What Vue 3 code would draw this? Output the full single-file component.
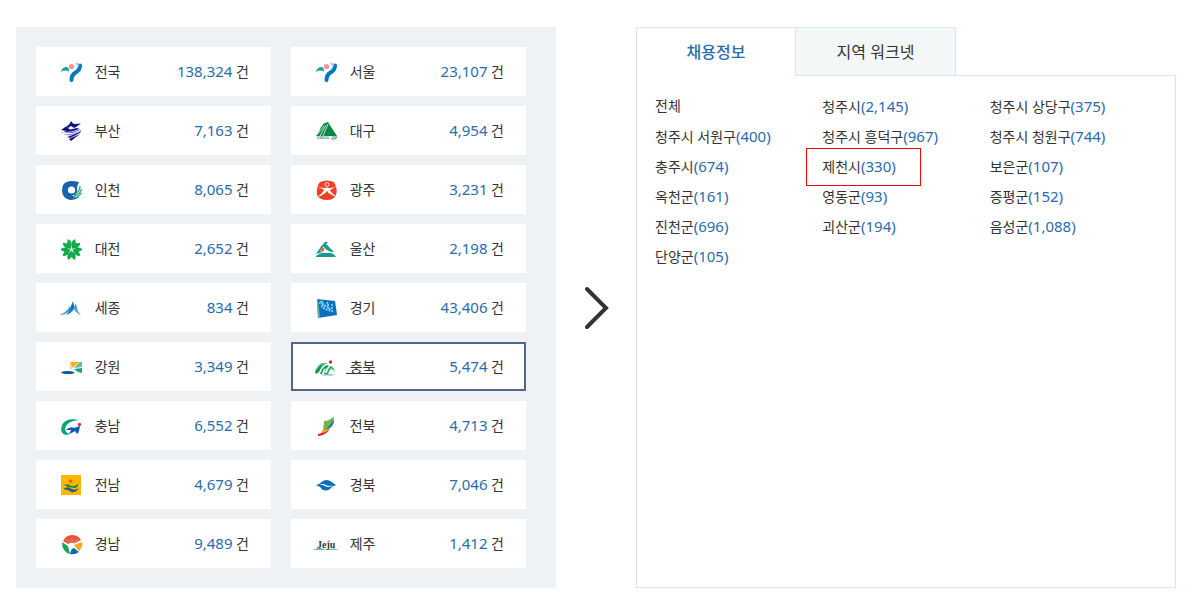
<template>
  <div class="page">
    <ul class="region_list">
      <li v-for="region in regions" :key="region.name">
        <button
          class="region"
          :class="{ active: region.name === selected }"
          @click="selected = region.name"
        >
          <svg class="region_icon" viewBox="0 0 28 24" aria-hidden="true" v-html="icons[region.icon]"></svg>
          <span class="region_name">&nbsp;{{ region.name }}</span>
          <span class="region_count"
            ><span class="number">{{ region.count.toLocaleString('en-US') }}</span> 건</span
          >
        </button>
      </li>
    </ul>

    <div class="arrow">
      <svg viewBox="0 0 28 44" aria-hidden="true">
        <path d="M5 3L24 22L5 41" />
      </svg>
    </div>

    <div class="detail">
      <div class="tabs" role="tablist">
        <button
          v-for="tab in tabs"
          :key="tab"
          class="tab"
          :class="{ active: tab === activeTab }"
          role="tab"
          :aria-selected="tab === activeTab"
          @click="activeTab = tab"
        >
          {{ tab }}
        </button>
      </div>
      <ul class="city_list">
        <li v-for="city in cities" :key="city.name" :class="{ marked: city.name === '제천시' }">
          <a href="#" @click.prevent
            >{{ city.name
            }}<span v-if="city.count" class="number">({{ city.count.toLocaleString('en-US') }})</span></a
          >
        </li>
      </ul>
    </div>
  </div>
</template>

<script setup>
import { ref } from 'vue'

const selected = ref('충북')
const tabs = ['채용정보', '지역 워크넷']
const activeTab = ref('채용정보')

const regions = [
  { name: '전국', count: 138324, icon: 'seoul' },
  { name: '서울', count: 23107, icon: 'seoul' },
  { name: '부산', count: 7163, icon: 'busan' },
  { name: '대구', count: 4954, icon: 'daegu' },
  { name: '인천', count: 8065, icon: 'incheon' },
  { name: '광주', count: 3231, icon: 'gwangju' },
  { name: '대전', count: 2652, icon: 'daejeon' },
  { name: '울산', count: 2198, icon: 'ulsan' },
  { name: '세종', count: 834, icon: 'sejong' },
  { name: '경기', count: 43406, icon: 'gyeonggi' },
  { name: '강원', count: 3349, icon: 'gangwon' },
  { name: '충북', count: 5474, icon: 'chungbuk' },
  { name: '충남', count: 6552, icon: 'chungnam' },
  { name: '전북', count: 4713, icon: 'jeonbuk' },
  { name: '전남', count: 4679, icon: 'jeonnam' },
  { name: '경북', count: 7046, icon: 'gyeongbuk' },
  { name: '경남', count: 9489, icon: 'gyeongnam' },
  { name: '제주', count: 1412, icon: 'jeju' },
]

const cities = [
  { name: '전체' },
  { name: '청주시', count: 2145 },
  { name: '청주시 상당구', count: 375 },
  { name: '청주시 서원구', count: 400 },
  { name: '청주시 흥덕구', count: 967 },
  { name: '청주시 청원구', count: 744 },
  { name: '충주시', count: 674 },
  { name: '제천시', count: 330 },
  { name: '보은군', count: 107 },
  { name: '옥천군', count: 161 },
  { name: '영동군', count: 93 },
  { name: '증평군', count: 152 },
  { name: '진천군', count: 696 },
  { name: '괴산군', count: 194 },
  { name: '음성군', count: 1088 },
  { name: '단양군', count: 105 },
]

const petal = 'M13.5 11.500L10 8Q8.500 4 10.500 2L13.500 5L16.500 2Q18.500 4 17 8Z'

const icons = {
  seoul: `
    <path d="M3 12Q4 7 9 7Q11 7.500 11 11.500Q7 9.500 3 12Z" fill="#00a79d"/>
    <circle cx="13.500" cy="6.500" r="2.600" fill="#f4919f"/>
    <path d="M22 5.500Q22 10 17.500 12.500Q13.500 15 13.500 20" fill="none" stroke="#0078c4" stroke-width="4" stroke-linecap="round"/>
    <path d="M17 3L20 2.500L21 6L19 8Q19.500 5.500 17 3Z" fill="#a8cde9"/>`,
  busan: `
    <g fill="#10128a"><path d="M13 2L15 4.500L17 5L23 4.500L18 8L16 9L13 7L10 9L8 8L11.500 5Z"/>
    <path d="M3 11L8 7.500L12 10.500L19 9L23 10.500L14 14L3.500 14L8 12Z"/>
    <path d="M5 16L14 15L23 11.500L22 14L12 19L9 18L14 16.500Z"/><path d="M11 20L22 15L13 22Z"/></g>
    <path d="M5 13.500L13 13L23 10M7 16.500L13 16L22 12.500" fill="none" stroke="#fff" stroke-width=".8"/>`,
  incheon: `
    <path d="M21 4Q17 3 12 3Q4 4 4 12Q4 20 12 22Q18 22 21 19Q18 18 19 12Q19 7 21 4Z" fill="#1b61ad"/>
    <circle cx="13.500" cy="12" r="3.600" fill="#fff"/>
    <path d="M23.500 7Q23 14 17 17L14 17Q18 21 23 17Z" fill="#fff"/>
    <path d="M22 8Q22 13 17 16M23.500 11Q22 17 16 18M23.500 15Q20 20 15 20" fill="none" stroke="#30aa80" stroke-width="1.300"/>`,
  daejeon: [36, 108, 180, 252, 324]
    .map((a) => `<path d="${petal}" transform="rotate(${a} 13.500 12.500)" fill="#12ab4b"/>`)
    .join(''),
  sejong: `
    <path d="M2 19Q9 16 12 10L12 12L15 5L16 10L18 8Q19 16 23 19Q18 17 16 13Q13 18 8 19L11 15Q7 19 2 19Z" fill="#248fd1"/>
    <path d="M4 18Q9 16 11 12M16 10Q17 14 21 18" fill="none" stroke="#8fcbea" stroke-width=".8"/>
    <path d="M15 6L15.500 12L12 15Z" fill="#1460ac"/>`,
  gangwon: `
    <path d="M12 7L22 7L14 13Z" fill="#fbae25"/><path d="M11.500 9L14 13L12 15Z" fill="#f7cf7c"/>
    <path d="M22 7H24V12L16 13Z" fill="#60bd9c"/><path d="M16 14L24 13V18L20 17Z" fill="#16a18c"/>
    <path d="M3 17Q10 15 16 17Q18 19 9 19Q4 19 3 17Z" fill="#13529a"/>`,
  chungnam: `
    <path d="M21 6Q8 3 4 11Q1 19 8 21L12 20Q5 18 8 12Q11 7 21 6Z" fill="#0ca478"/>
    <path d="M8 16Q12 12 16 14L22 12Q21 19 19 20L17 17Q14 19 11 20L13 16Z" fill="#075eac"/>
    <circle cx="21.500" cy="10.500" r="1.700" fill="#ea2640"/>`,
  jeonnam: `
    <rect x="3" y="2" width="20" height="20" fill="#ffb600"/><circle cx="12.500" cy="8" r="1.800" fill="#f05a22"/>
    <path d="M6 12Q10 10 13 13Q16 14 20 11Q20 15 16 15Q11 15 6 12Z" fill="#168447"/>
    <path d="M6 16Q10 13 13 16Q16 18 20 16Q18 19 14 19Q10 16 6 16Z" fill="#145d91" stroke="#145d91" stroke-width=".6"/>`,
  gyeongnam: `
    <path d="M5 9Q8 3 14 3Q20 3 23 8L15 12L12 13Z" fill="#ed5034"/>
    <path d="M4 10L10 14L12 22Q4 20 4 10Z" fill="#18a65b"/>
    <path d="M16 13L24 10Q25 16 21 19Z" fill="#faa81e"/><path d="M12 22Q13 16 16 16L21 20Q17 23 12 22Z" fill="#1267b3"/>
    <path d="M13 12L8 7M14 12V6M15 12L20 7" stroke="#f8b09f" stroke-width=".8"/>
    <path d="M9 13L12 11L16 11L15 15L12 16Z" fill="#fff"/>`,
  daegu: `
    <path d="M3 17Q7 12 8 8L10 6L10 5L12 4L15 3Q18 8 24 17Z" fill="#078746"/>
    <path d="M4 16L11 7M7 17L13 6M10 17L15 5" stroke="#e6f4eb" stroke-width=".8"/>
    <text x="4" y="20" font-family="Liberation Sans, sans-serif" font-size="3.500" font-weight="700" fill="#54a57a">DAEGU</text>
    <path d="M19 18H24L22 20H18" fill="none" stroke="#32965f"/>`,
  gwangju: `
    <path d="M7 4Q14 1 21 4Q25 11 23 17Q21 22 14 22Q6 22 4 17Q3 9 7 4Z" fill="#f04128"/>
    <circle cx="14" cy="6.500" r="2" fill="#f04128" stroke="#fff" stroke-width=".8"/>
    <path d="M4 8Q10 11 14 9.500Q18 11 24 8L17 12Q18 15 24 19Q17 17 14 13Q11 17 4 19Q10 15 11 12Z" fill="#fff"/>`,
  ulsan: `
    <path d="M10 7Q12 4 15 5L13 7L21 15Q14 15 10 9Z" fill="#159a93"/>
    <path d="M9 8L11 9L7 14L10 15L3 17Z" fill="#159a93"/>
    <path d="M3 19Q8 15 13 16Q20 15 23 20H3Z" fill="#159a93"/>
    <circle cx="9.500" cy="12.500" r="1.900" fill="#ef6331"/>`,
  gyeonggi: `
    <path d="M4 3L22 5L24 19L5 22Z" fill="#086fbd"/><path d="M4 3L5 22L7 21L5 4Z" fill="#56b5a6"/>
    <path d="M7 5L20 16M9 5L11 12L8 10M14 6L16 13M19 8L19 15M10 12L17 15M6 7L12 10L17 8" fill="none" stroke="#83cdf1" stroke-width="1.600" stroke-dasharray="2 1"/>`,
  chungbuk: `
    <path d="M2 17Q5 8 11 8L15 8Q9 9 6 17L3 19Z" fill="#0b9c50"/>
    <path d="M7 19Q9 12 14 10L16 11Q13 13 12 18L14 18Q15 13 18 11Q21 13 22 17Q19 12 17 14L15 19H11L13 13Q10 14 9 19Z" fill="#159e56"/>
    <path d="M4 14Q6 9 13 8M16 17Q18 12 20 15" fill="none" stroke="#9dd6ae" stroke-width=".8"/>
    <circle cx="17.500" cy="7" r="1.700" fill="#ed202d"/><path d="M7 20Q15 18 22 20Q16 21 7 20Z" fill="#67bde8"/>`,
  jeonbuk: `
    <path d="M11 7Q17 7 21 2Q20 14 10 17Z" fill="#75b73b"/>
    <path d="M21 4Q22 14 11 17Q18 11 21 4Z" fill="#187eb8"/>
    <path d="M10 16Q16 16 19 12Q15 19 7 20Z" fill="#f8a61b"/><path d="M5 20Q13 19 17 15Q12 22 5 22Z" fill="#d91543"/>`,
  gyeongbuk: `
    <path d="M3 12Q7 11 10 8Q15 5 20 10L23 12Q19 13 17 16Q11 20 7 14Z" fill="#0870b8"/>
    <path d="M6 12Q10 10 13 12Q16 14 20 12Q17 15 13 13.500Q9 11 6 12Z" fill="#fff"/>`,
  jeju: `
    <text x="4" y="16" font-family="Liberation Serif, serif" font-size="10" font-weight="700" fill="#333">Jeju</text>
    <path d="M0 18Q6 14 13 18Z" fill="#66a5d4"/><path d="M14 18Q20 15 26 18Z" fill="#62bfa5"/>
    <circle cx="16" cy="9" r="1" fill="#f5a24c"/>`,
}
</script>

<style>
body {
  margin: 0;
  background: #fff;
}
</style>

<style scoped>
.page,
.page * {
  box-sizing: border-box;
}
.page {
  display: grid;
  grid-template-columns: minmax(0, 1fr) 80px minmax(0, 1fr);
  padding: 27px 15px 22px 16px;
  font-family: 'Noto Sans', 'Noto Sans CJK KR', sans-serif;
  font-size: 14px;
  color: #333;
}
ul {
  list-style: none;
  margin: 0;
}
button {
  font-family: inherit;
  color: inherit;
  cursor: pointer;
}
.region_list {
  display: grid;
  grid-template-columns: 1fr 1fr;
  align-content: start;
  gap: 10px 20px;
  padding: 20px 30px 20px 20px;
  background: #eef2f5;
}
.region {
  display: flex;
  align-items: center;
  width: 100%;
  height: 49px;
  padding: 0 20px;
  border: 2px solid #fff;
  background: #fff;
  font-size: 14px;
}
.region.active {
  border-color: #536689;
}
.region.active .region_name {
  text-decoration: underline;
}
.region_icon {
  width: 28px;
  height: 24px;
  margin-right: 5px;
}
.region_name,
.region_count {
  padding-bottom: 2px;
}
.region_count {
  margin-left: auto;
}
.number {
  font-size: 15px;
  color: #2a6cab;
}
.arrow {
  display: flex;
  align-items: center;
  justify-content: center;
}
.arrow svg {
  width: 28px;
  height: 44px;
  fill: none;
  stroke: #333;
  stroke-width: 4;
  stroke-linecap: round;
}
.detail {
  display: flex;
  flex-direction: column;
}
.tabs {
  position: relative;
  z-index: 1;
  display: flex;
  margin-bottom: -1px;
}
.tab {
  width: 161px;
  height: 49px;
  padding: 0 0 2px;
  border: 1px solid #dbe4e9;
  background: #f4f7f8;
  font-size: 16px;
}
.tab + .tab {
  margin-left: -1px;
}
.tab.active {
  border-bottom-color: #fff;
  background: #fff;
  color: #2a6cab;
  font-weight: 500;
}
.tab:first-child {
  width: 160px;
}
.city_list {
  flex: 1;
  display: grid;
  grid-template-columns: repeat(3, 1fr);
  grid-auto-rows: 30px;
  align-content: start;
  padding: 15px 18px;
  border: 1px solid #dbe4e9;
}
.city_list li {
  line-height: 30px;
  white-space: nowrap;
}
.city_list a {
  color: inherit;
  text-decoration: none;
}
.marked {
  position: relative;
}
/* red frame around the marked city */
.marked::after {
  content: '';
  position: absolute;
  top: -3px;
  left: -16px;
  width: 113px;
  height: 36px;
  border: 1px solid #f00;
  pointer-events: none;
}
</style>
